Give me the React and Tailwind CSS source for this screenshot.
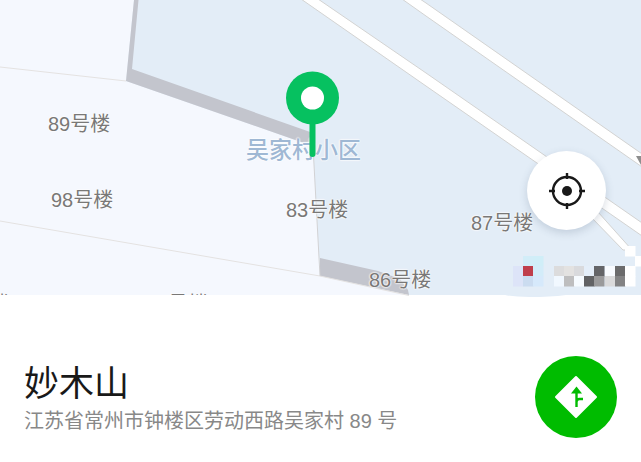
import React from "react";

const buildings = [
  { name: "89号楼", place: "left-[48px] top-[111px]" },
  { name: "98号楼", place: "left-[51px] top-[187px]" },
  { name: "83号楼", place: "left-[286px] top-[197px]" },
  { name: "87号楼", place: "left-[471px] top-[210px]" },
  { name: "86号楼", place: "left-[369px] top-[267px]" },
  { name: "楼", place: "left-[-11px] top-[291px]" },
  { name: "号楼", place: "left-[168px] top-[291px]" },
];

// blurred blocks over the map credit
const blocks = [
  [523, 256, "#d2edf8"],
  [533, 256, "#d0eef8"],
  [513, 266, "#dde4f8"],
  [523, 266, "#bf3e4b"],
  [533, 266, "#d3ecf9"],
  [513, 276, "#dde4f8"],
  [523, 276, "#cbdcf0"],
  [533, 276, "#d6e9fb"],
  [554, 266, "#dcdcdd"],
  [564, 266, "#e3e2e1"],
  [574, 266, "#d9dadd"],
  [584, 266, "#e4eef9"],
  [594, 266, "#646568"],
  [605, 266, "#f8fbff"],
  [615, 266, "#6b6b6c"],
  [625, 266, "#ffffff"],
  [554, 276, "#f1f8ff"],
  [564, 276, "#bebebf"],
  [574, 276, "#f6fbff"],
  [584, 276, "#616264"],
  [594, 276, "#9a9a9b"],
  [605, 276, "#dadadb"],
  [615, 276, "#838384"],
  [625, 276, "#ffffff"],
  [625, 246, "#ffffff"],
  [635, 256, "#ffffff"],
];

function MapCanvas() {
  return (
    <svg
      className="block h-full w-full"
      viewBox="0 0 641 298"
      preserveAspectRatio="xMinYMin slice"
      aria-hidden="true"
    >
      <rect width="641" height="295" fill="#e3edf7" />
      <path d="M505 295Q514 297 530 297Q550 297 566 295Z" fill="#e3edf7" />

      {/* Blocks of land */}
      <path d="M0 0H134L126 81L301 142L313 146L320 276L409 295H0Z" fill="#f5f8fe" />
      <path d="M134 0H138.500L132 69L313 133V142H301L126 81Z" fill="#c3c5cd" />
      <path d="M320 258L378 271L400 279L408 290L409 295L320 276Z" fill="#c3c5cd" />
      <g fill="none" stroke="#e4e2e1" strokeWidth="1">
        <path d="M0 67L126 81" />
        <path d="M0 221L215 258L320 276L409 295.500" />
        <path d="M313 146L320 276" stroke="#d2d2d4" />
      </g>

      {/* Roads */}
      <g fill="#fff" stroke="#d3d3d2" strokeWidth="1">
        <path d="M590 203L598 212L632 250H623L591 217Z" />
        <path d="M301 -1L426 86L645 238V225L426 73L318 -1Z" />
        <path d="M402 -1L426 16L645 169V156L426 3L420 -1Z" />
      </g>
      <path d="M636 156H641V165Z" fill="#8e8e8e" />

      {blocks.map(([x, y, color]) => (
        <rect key={`${x}-${y}`} x={x} y={y} width="10.500" height="10.500" fill={color} />
      ))}
    </svg>
  );
}

function MapPin() {
  return (
    <svg
      className="absolute left-[286px] top-[71px]"
      width="53"
      height="88"
      viewBox="0 0 53 88"
      role="img"
      aria-label="妙木山"
    >
      <path d="M26.500 40V83" stroke="#06c160" strokeWidth="6" strokeLinecap="round" />
      <circle cx="26.500" cy="27" r="26.500" fill="#06c160" />
      <circle cx="26.500" cy="27" r="11.500" fill="#fff" />
    </svg>
  );
}

export default function App() {
  return (
    <main className="min-h-screen bg-white font-['Liberation_Sans','Noto_Sans_CJK_SC',sans-serif]">
      <section className="relative h-[298px] overflow-hidden" aria-label="地图">
        <MapCanvas />

        {/* Building labels */}
        <div className="absolute inset-x-0 top-0 h-[295px] overflow-hidden">
          {buildings.map((b) => (
            <span
              key={b.name}
              className={`absolute whitespace-nowrap text-[20px] leading-[26px] text-[#797877] [text-shadow:0_0_2px_#fff,0_0_2px_#fff,0_0_2px_#fff] ${b.place}`}
            >
              {b.name}
            </span>
          ))}
          <span className="absolute left-[246px] top-[136px] whitespace-nowrap text-[23px] font-medium leading-[28px] text-[#9fb8d4] [text-shadow:0_0_2px_#fff,0_0_2px_#fff,0_0_2px_#fff]">
            吴家村小区
          </span>
        </div>

        <MapPin />

        {/* Locate me */}
        <button
          type="button"
          aria-label="定位"
          className="absolute right-[35px] top-[151px] flex size-[79px] items-center justify-center rounded-full bg-white shadow-[0_3px_8px_rgba(60,80,110,0.2)]"
        >
          <svg width="38" height="38" viewBox="0 0 38 38" fill="none" stroke="#191919" strokeWidth="2.400">
            <circle cx="19" cy="19" r="14" />
            <circle cx="19" cy="19" r="5" fill="#191919" stroke="none" />
            <path d="M19 1V7M19 31V37M1 19H7M31 19H37" />
          </svg>
        </button>
      </section>

      {/* Place details */}
      <section className="flex items-start justify-between gap-4 px-6 pb-6 pt-[58px]">
        <div className="min-w-0 pt-2">
          <h1 className="text-[35px] font-normal leading-[40px] text-[#191919]">妙木山</h1>
          <p className="text-[20px] leading-[34px] text-[#888888]">江苏省常州市钟楼区劳动西路吴家村 89 号</p>
        </div>
        <button
          type="button"
          aria-label="导航"
          className="flex size-[82px] shrink-0 items-center justify-center rounded-full bg-[#00bc00]"
        >
          <svg width="44" height="44" viewBox="0 0 44 44">
            <path
              d="M22 2L42 22L22 42L2 22Z"
              fill="#fff"
              stroke="#fff"
              strokeWidth="2"
              strokeLinejoin="round"
            />
            <path d="M22.500 11.500L28 18.500H17Z" fill="#00bc00" />
            <path d="M22.500 17V32M22.500 27Q22.500 24 25.500 24H29" fill="none" stroke="#00bc00" strokeWidth="2.400" />
          </svg>
        </button>
      </section>
    </main>
  );
}
